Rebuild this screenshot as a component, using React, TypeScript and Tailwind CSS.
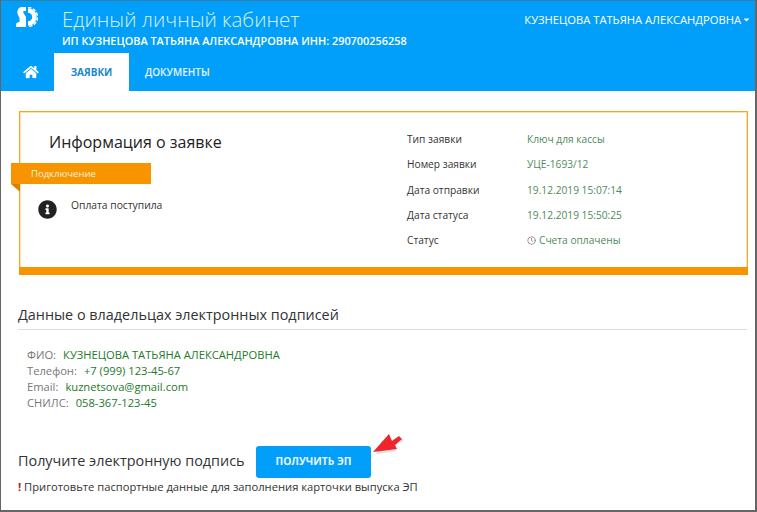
import React from 'react';
import { FaHome, FaInfoCircle, FaCaretDown } from 'react-icons/fa';
import { FiClock } from 'react-icons/fi';

const font = { fontFamily: '"Open Sans", sans-serif' };

const rows = [
  { label: 'Тип заявки', value: 'Ключ для кассы' },
  { label: 'Номер заявки', value: 'УЦЕ-1693/12' },
  { label: 'Дата отправки', value: '19.12.2019 15:07:14' },
  { label: 'Дата статуса', value: '19.12.2019 15:50:25' },
];

const owner = [
  { label: 'ФИО:', value: 'КУЗНЕЦОВА ТАТЬЯНА АЛЕКСАНДРОВНА' },
  { label: 'Телефон:', value: '+7 (999) 123-45-67' },
  { label: 'Email:', value: 'kuznetsova@gmail.com' },
  { label: 'СНИЛС:', value: '058-367-123-45' },
];

const Logo = () => (
  <svg width="22" height="20" viewBox="0 0 22 20" className="shrink-0">
    <path d="M5 0h5v4H8c-1 0-1 1-.5 2L10 10v10H0v-2.500C0 16 1.500 15 3.500 15v-4L2 8C.5 4 2 1 5 0z" fill="#fff" />
    <path d="M12 3.500A6.500 6.500 0 0 1 12 16.500" fill="none" stroke="#fff" strokeWidth="4.500" />
    <path d="M12 .5A9.500 9.500 0 0 1 12 19.500" fill="none" stroke="#fff" strokeWidth="1.500" strokeDasharray="3.500 1.500" />
  </svg>
);

const App: React.FC = () => {
  return (
    <div className="relative w-[757px] h-[512px] overflow-hidden bg-white text-[#222] border-l border-r-2 border-b-2 border-[#666]" style={font}>
      {/* Header */}
      <div className="h-[91px] bg-[#029ffa] border-t border-[#3a7ea8] flex flex-col">
        <div className="h-[52px] flex">
          <div className="w-[61px] pl-[15px] pt-[6px]">
            <Logo />
          </div>
          <div className="flex-1">
            <div className="text-[20.500px] leading-[32px] font-light text-[#d8f0ff] mt-[2px]">Единый личный кабинет</div>
            <div className="text-[10.900px] leading-[14px] font-semibold text-white mt-[-1px]">ИП КУЗНЕЦОВА ТАТЬЯНА АЛЕКСАНДРОВНА ИНН: 290700256258</div>
          </div>
          <div className="flex items-start pt-[11px] pr-[4px] text-[11.200px] leading-[15px] text-white">
            КУЗНЕЦОВА ТАТЬЯНА АЛЕКСАНДРОВНА
            <FaCaretDown className="w-[9px] h-[9px] ml-[1px] mt-[3px]" />
          </div>
        </div>
        <div className="flex-1 flex items-stretch">
          <div className="w-[53px] flex items-center justify-center pl-[6px]">
            <FaHome className="w-[16px] h-[14px] text-white" />
          </div>
          <div className="w-[75px] bg-white flex items-center justify-center text-[10px] font-bold text-[#1b87c9]">ЗАЯВКИ</div>
          <div className="flex items-center pl-[16px] text-[10px] font-semibold text-[#e4f4ff]">ДОКУМЕНТЫ</div>
        </div>
      </div>

      {/* Info card */}
      <div className="relative mt-[20px] ml-[18px] w-[729px] h-[164px] border-t border-l border-r border-t-[#f5a623] border-l-[#f5a623] border-r-[#f5a623] shadow-[inset_1px_1px_0_#fbe3b0,inset_-1px_0_0_#fbe3b0] flex flex-col">
        <div className="flex-1 flex">
          <div className="w-[387px] pl-[29px] pt-[19px] text-[16px] leading-[22px]">Информация о заявке</div>
          <div className="pt-[19px] text-[10.200px]">
            {rows.map(r => (
              <div key={r.label} className="flex h-[25.300px] leading-[16px]">
                <div className="w-[120px] text-[#333]">{r.label}</div>
                <div className="text-[#4f8a5b]">{r.value}</div>
              </div>
            ))}
            <div className="flex h-[25px] leading-[16px]">
              <div className="w-[120px] text-[#333]">Статус</div>
              <div className="flex items-center gap-[3px] h-[16px] text-[#4f8a5b]">
                <FiClock className="w-[9px] h-[9px] text-[#777]" />
                Счета оплачены
              </div>
            </div>
          </div>
        </div>
        <div className="h-[8px] bg-[#f79400] -mx-px" />

        {/* Ribbon hanging over the card edge */}
        <div className="absolute left-[-9px] top-[51px] w-[140px] h-[21px] bg-[#f79400] pl-[20px] text-[9.500px] leading-[21px] text-[#fff2dc]">Подключение</div>
        <div className="absolute left-[-9px] top-[72px] w-0 h-0 border-t-[8px] border-t-[#d98200] border-l-[9px] border-l-transparent" />
        <div className="absolute left-[18px] top-[88px] flex items-start">
          <FaInfoCircle className="w-[19px] h-[19px] text-[#222]" />
          <div className="ml-[14px] mt-[-1px] text-[10.300px] leading-[12px] text-[#333]">Оплата поступила</div>
        </div>
      </div>

      {/* Owners */}
      <div className="mt-[28px] ml-[17px] w-[729px] h-[27px] border-b border-[#ddd] text-[14.400px] leading-[24px] text-[#333]">Данные о владельцах электронных подписей</div>
      <div className="mt-[17px] ml-[26px] text-[11.200px] leading-[16px]">
        {owner.map(o => (
          <div key={o.label} className="flex gap-[7px]">
            <span className="text-[#777]">{o.label}</span>
            <span className="text-[#1d7a2a]">{o.value}</span>
          </div>
        ))}
      </div>

      {/* Action */}
      <div className="mt-[35px] ml-[17px] flex items-center">
        <div className="text-[14.400px] text-[#333] w-[238px] mt-[-2px]">Получите электронную подпись</div>
        <div className="w-[115px] h-[32px] rounded-[3px] bg-[#029ffa] flex items-center justify-center text-[10.300px] font-bold text-[#e8f6ff]">ПОЛУЧИТЬ ЭП</div>
      </div>
      <div className="mt-[2px] ml-[17px] text-[11.200px] leading-[14px] text-[#333]">
        <span className="font-bold text-[#b02030]">!</span> Приготовьте паспортные данные для заполнения карточки выпуска ЭП
      </div>

      {/* Red pointer arrow */}
      <svg width="34" height="26" viewBox="0 0 34 26" className="absolute left-[371px] top-[431px]">
        <path d="M4 23 L10 9 L14 12 L27 6 L32 9 L21 16 L25 20 Z" fill="#c8c8c8" opacity="0.6" />
        <path d="M1 21 L17 3 L20 10 L27 5 L30 8 L23 14 L25 18 Z" fill="#f0242c" />
      </svg>
    </div>
  );
};

export default App;
